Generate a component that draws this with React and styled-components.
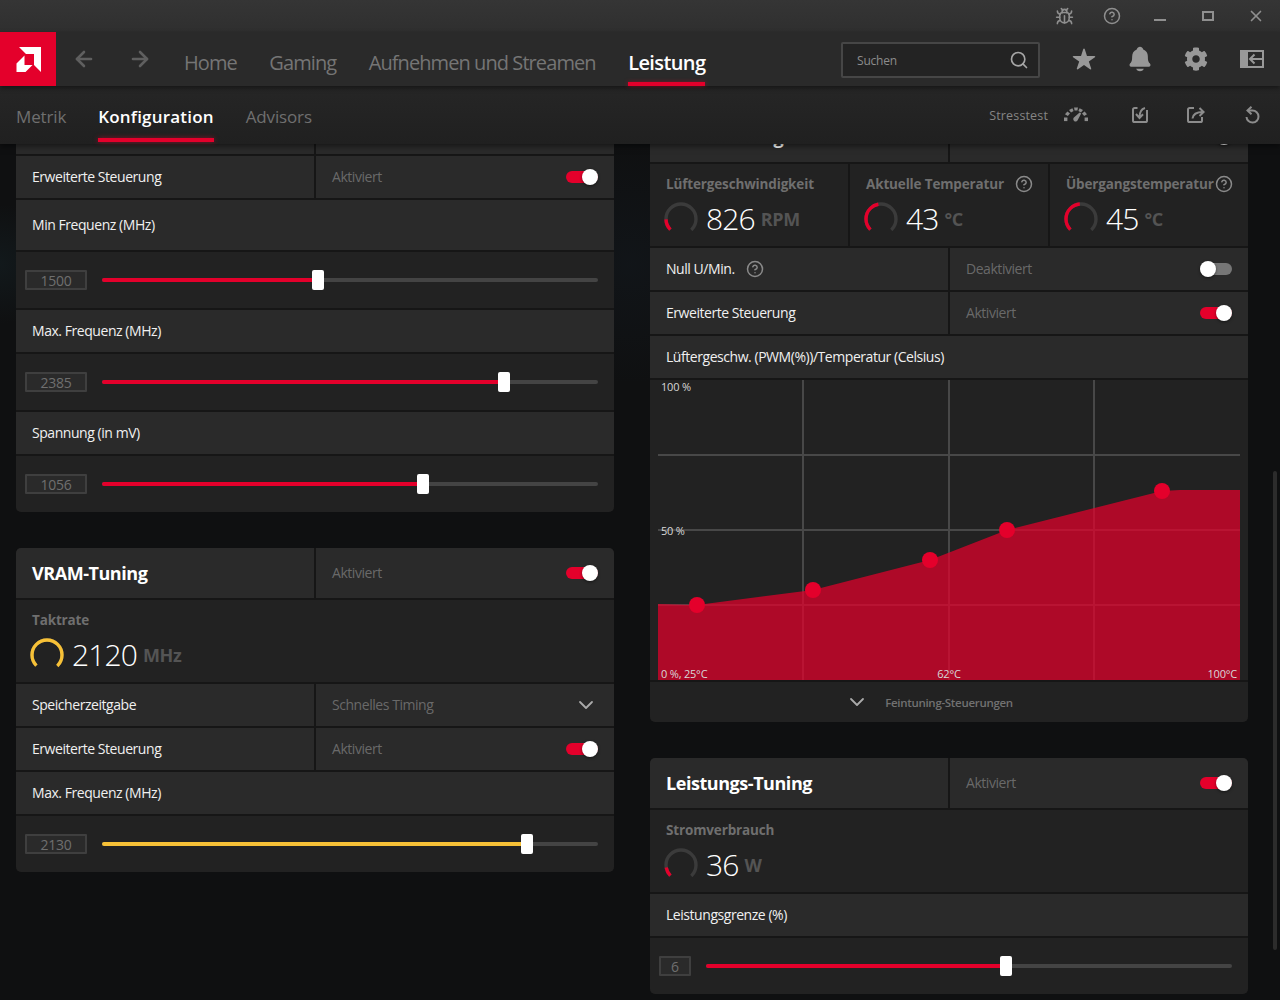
import styled, { createGlobalStyle } from "styled-components";
import { ArrowLeft, ArrowRight, Bug, ChevronDown, CircleHelp, Search, X } from "lucide-react";
import { FaCog } from "react-icons/fa";
import { IoNotifications, IoStar } from "react-icons/io5";

const RED = "#e4002b";
const YELLOW = "#f7c137";

const GlobalStyle = createGlobalStyle`
  html, body { margin: 0; padding: 0; background: #0f1011; }
  body { font-family: "Open Sans", "Liberation Sans", sans-serif; }
  * { box-sizing: border-box; }
`;

const Page = styled.div`
  position: relative;
  width: 1280px;
  height: 1000px;
  overflow: hidden;
  display: flex;
  flex-direction: column;
  background: #0f1011;
`;

const Header = styled.header`
  position: relative;
  z-index: 2;
  flex: none;
  box-shadow: 0 2px 6px rgba(0, 0, 0, 0.5);
`;

const TitleBar = styled.div`
  height: 32px;
  display: flex;
  justify-content: flex-end;
  align-items: center;
  background: linear-gradient(#353535, #2f2f2f);
`;

const TitleBtn = styled.div`
  width: 48px;
  display: flex;
  justify-content: center;
  align-items: center;
  color: #8f8f8f;
`;

const MinBar = styled.div`
  width: 12px;
  height: 2px;
  margin-top: 8px;
  background: #8f8f8f;
`;

const MaxBox = styled.div`
  width: 12px;
  height: 10px;
  border: 2px solid #8f8f8f;
`;

const NavBar = styled.div`
  position: relative;
  z-index: 1;
  height: 54px;
  display: flex;
  align-items: stretch;
  background: #2a2a2a;
  box-shadow: 0 2px 5px rgba(0, 0, 0, 0.45);
`;

const Logo = styled.div`
  width: 56px;
  display: flex;
  align-items: center;
  justify-content: center;
  background: ${RED};
`;

const ArrowBtn = styled.div`
  width: 56px;
  display: flex;
  align-items: center;
  justify-content: center;
  color: #5f5f5f;
`;

const NavLinks = styled.nav`
  display: flex;
  gap: 32.5px;
  margin-left: 16px;
`;

const NavLink = styled.div`
  position: relative;
  display: flex;
  align-items: center;
  padding-top: 6px;
  font-size: 20px;
  letter-spacing: ${(p) => (p.$active ? "-0.6px" : "-0.92px")};
  white-space: nowrap;
  color: ${(p) => (p.$active ? "#fff" : "#757575")};
  font-weight: ${(p) => (p.$active ? 600 : 400)};
  &::after {
    content: "";
    display: ${(p) => (p.$active ? "block" : "none")};
    position: absolute;
    left: 0;
    right: 0;
    bottom: 0;
    height: 4px;
    background: ${RED};
    box-shadow: 0 0 4px rgba(228, 0, 43, 0.5);
  }
`;

const SearchBox = styled.div`
  width: 199px;
  height: 36px;
  margin: 10px 16px 0 auto;
  padding: 0 9px 0 14px;
  display: flex;
  align-items: center;
  justify-content: space-between;
  background: #232323;
  border: 2px solid #464646;
  border-radius: 2px;
  color: #8c8c8c;
  font-size: 12px;
  letter-spacing: -0.2px;
  svg { color: #a6a6a6; }
`;

const NavIcon = styled.div`
  width: 56px;
  display: flex;
  align-items: center;
  justify-content: center;
  color: #989898;
`;

const SubBar = styled.div`
  height: 58px;
  display: flex;
  align-items: stretch;
  padding-left: 16px;
  background: linear-gradient(#262626, #202020);
`;

const SubLinks = styled.nav`
  display: flex;
  gap: 32px;
`;

const SubLink = styled.div`
  position: relative;
  display: flex;
  align-items: center;
  padding-top: 2px;
  font-size: 17px;
  letter-spacing: ${(p) => (p.$active ? "0.2px" : "-0.15px")};
  color: ${(p) => (p.$active ? "#fff" : "#6f6f6f")};
  font-weight: ${(p) => (p.$active ? 600 : 400)};
  &::after {
    content: "";
    display: ${(p) => (p.$active ? "block" : "none")};
    position: absolute;
    left: 0;
    right: 0;
    bottom: 2px;
    height: 4px;
    background: ${RED};
    box-shadow: 0 0 5px rgba(228, 0, 43, 0.55);
  }
`;

const SubTools = styled.div`
  margin-left: auto;
  display: flex;
  align-items: center;
  padding-bottom: 1px;
`;

const StressLabel = styled.span`
  font-size: 12.5px;
  letter-spacing: 0.15px;
  color: #858585;
  margin: 2px 16px 0 0;
`;

const SubIcon = styled.div`
  width: 56px;
  display: flex;
  justify-content: center;
  color: #8c8c8c;
  margin-left: ${(p) => p.$gap || 0}px;
`;

const Main = styled.main`
  flex: 1;
  min-height: 0;
  display: grid;
  grid-template-columns: 598px 598px;
  column-gap: 36px;
  align-items: start;
  padding-left: 16px;
  background:
    radial-gradient(circle at 630px 120px, rgba(30, 50, 70, 0.14), transparent 120px),
    radial-gradient(circle at 0 120px, rgba(30, 60, 70, 0.2), transparent 60px);
`;

const Column = styled.div`
  display: flex;
  flex-direction: column;
  gap: 36px;
  margin-top: ${(p) => p.$offset || 0}px;
`;

const Panel = styled.section`
  display: flex;
  flex-direction: column;
  gap: 2px;
  background: #161616;
  border-radius: ${(p) => (p.$cutTop ? "0 0 5px 5px" : "5px")};
  overflow: hidden;
`;

const Split = styled.div`
  display: grid;
  grid-template-columns: 298px 1fr;
  gap: 2px;
  height: ${(p) => p.$h || 42}px;
`;

const Cell = styled.div`
  display: flex;
  align-items: center;
  justify-content: space-between;
  padding: 0 16px;
  background: #2a2a2a;
  height: ${(p) => (p.$h ? p.$h + "px" : "auto")};
  font-size: 14px;
  line-height: 18px;
  letter-spacing: -0.45px;
  color: #f0f0f0;
`;

const Muted = styled.span`
  color: #696969;
`;

const Title = styled.span`
  font-size: 18px;
  font-weight: 700;
  letter-spacing: -0.45px;
  color: #fff;
`;

const InlineHelp = styled.span`
  display: flex;
  margin-left: 11px;
  color: #8a8a8a;
`;

const LeftGroup = styled.span`
  display: flex;
  align-items: center;
`;

const SelectChevron = styled(ChevronDown)`
  color: #aaa;
`;

const Track = styled.div`
  position: relative;
  width: 32px;
  height: 12px;
  border-radius: 6px;
  background: ${(p) => (p.$on ? RED : "#767676")};
`;

const Knob = styled.div`
  position: absolute;
  top: -2px;
  ${(p) => (p.$on ? "right: 0;" : "left: 0;")}
  width: 16px;
  height: 16px;
  border-radius: 50%;
  background: #fff;
  box-shadow: 0 1px 3px rgba(0, 0, 0, 0.5);
`;

const Toggle = ({ on }) => (
  <Track $on={on}>
    <Knob $on={on} />
  </Track>
);

const StatGrid = styled.div`
  display: grid;
  grid-template-columns: repeat(3, 1fr);
  gap: 2px;
`;

const StatCell = styled.div`
  height: 82px;
  padding: 11px 15px 0 16px;
  background: #222;
`;

const StatLabel = styled.div`
  display: flex;
  justify-content: space-between;
  align-items: center;
  height: 18px;
  font-size: 13.5px;
  font-weight: 700;
  letter-spacing: -0.15px;
  white-space: nowrap;
  color: #6f6f6f;
  svg { color: #8a8a8a; flex: none; }
`;

const StatBody = styled.div`
  display: flex;
  align-items: center;
  margin: 7px 0 0 -2px;
`;

const StatValue = styled.span`
  margin: 2px 0 0 8px;
  font-size: 30px;
  font-weight: 300;
  line-height: 34px;
  letter-spacing: -0.9px;
  color: #fff;
`;

const StatUnit = styled.span`
  margin: 1px 0 0 6px;
  font-size: 18px;
  font-weight: 700;
  letter-spacing: -0.3px;
  color: #545454;
`;

const SliderRow = styled.div`
  height: 56px;
  display: flex;
  align-items: center;
  gap: 15px;
  padding: 0 16px 0 9px;
  background: #222;
`;

const ValueBox = styled.div`
  flex: none;
  width: ${(p) => p.$w || 62}px;
  height: 20px;
  display: flex;
  align-items: center;
  justify-content: center;
  border: 2px solid #3f3f3f;
  border-radius: 1px;
  background: #2a2a2a;
  font-size: 14px;
  letter-spacing: -0.2px;
  color: #6f6f6f;
`;

const Rail = styled.div`
  position: relative;
  flex: 1;
  height: 4px;
  border-radius: 2px;
  background: #444;
`;

const Fill = styled.div`
  height: 100%;
  border-radius: 2px;
  background: ${(p) => p.$color};
`;

const Thumb = styled.div`
  position: absolute;
  top: -8px;
  width: 12px;
  height: 20px;
  margin-left: -6px;
  border-radius: 2px;
  background: #fff;
`;

const Slider = ({ value, percent, color = RED, boxWidth }) => (
  <SliderRow>
    <ValueBox $w={boxWidth}>{value}</ValueBox>
    <Rail>
      <Fill $color={color} style={{ width: `${percent}%` }} />
      <Thumb style={{ left: `${percent}%` }} />
    </Rail>
  </SliderRow>
);

const WideStat = styled.div`
  height: 82px;
  padding: 11px 16px 0;
  background: #222;
`;

const ChartWrap = styled.div`
  height: 300px;
  padding: 0 8px;
  background: #222;
`;

const ChartSvg = styled.svg`
  display: block;
  background: #222;
  text {
    font-family: "Open Sans", "Liberation Sans", sans-serif;
    font-size: 11px;
    letter-spacing: -0.2px;
    fill: #d8d8d8;
  }
`;

const ChartFooter = styled.div`
  height: 40px;
  display: grid;
  grid-template-columns: 1fr auto 1fr;
  align-items: center;
  background: #222;
  font-size: 11.5px;
  font-weight: 600;
  letter-spacing: -0.3px;
  color: #717171;
  svg { justify-self: end; margin-right: 16px; color: #aaa; }
`;

const ScrollThumb = styled.div`
  position: absolute;
  top: 471px;
  left: 1273px;
  width: 4px;
  height: 479px;
  border-radius: 2px;
  background: #2c2c2c;
`;

// ring with the gap at the bottom, value is 0..1 of the arc
const Gauge = ({ value, color = RED, size = 34 }) => {
  const r = 15;
  const c = 2 * Math.PI * r;
  const arc = c * 0.75;
  return (
    <svg width={size} height={32} viewBox="0 0 34 32" style={{ flex: "none" }}>
      <g transform="rotate(135 17 17)" fill="none" strokeWidth="3.4">
        <circle cx="17" cy="17" r={r} stroke="#3b3b3b" strokeDasharray={`${arc} ${c}`} />
        <circle cx="17" cy="17" r={r} stroke={color} strokeDasharray={`${arc * value} ${c}`} />
      </g>
    </svg>
  );
};

const AmdLogo = () => (
  <svg width="25" height="25" viewBox="0 0 25 25" fill="#fff">
    <path d="M3 0H25V25L18 18V7H10Z" />
    <path d="M8.5 8.5L0.5 16.5V25H9.5L16.5 18H8.5Z" />
  </svg>
);

const PanelIcon = () => (
  <svg width="24" height="18" viewBox="0 0 24 18" fill="none">
    <rect x="0" y="0" width="8" height="18" fill="#989898" />
    <rect x="1" y="1" width="22" height="16" stroke="#989898" strokeWidth="2" />
    <path d="M23 9H10M14.5 4.5L10 9l4.5 4.5" stroke="#989898" strokeWidth="2" />
  </svg>
);

const StressIcon = () => (
  <svg width="24" height="15" viewBox="0 0 24 15" fill="#8c8c8c">
    <rect x="0" y="10.5" width="3.4" height="3.6" />
    <rect x="20.6" y="10.5" width="3.4" height="3.6" />
    <path d="M1 7.2L3.4 4.4L6 6.4L3.8 9Z" />
    <path d="M23 7.2L20.6 4.4L18 6.4L20.2 9Z" />
    <path d="M5 3L8.4 1.2L9.6 4L7 5.4Z" />
    <path d="M19 3L15.6 1.2L14.4 4L17 5.4Z" />
    <path d="M10 0.6H14L13.4 3.4H10.6Z" />
    <path d="M15.6 5.4L17.2 6.4L14 12.6A2.4 2.4 0 1 1 10.2 10.2Z" />
  </svg>
);

const ImportIcon = () => (
  <svg width="16" height="16" viewBox="0 0 16 16" fill="none" stroke="#8c8c8c" strokeWidth="2">
    <path d="M5.5 1H2.6A1.6 1.6 0 0 0 1 2.6V13.4A1.6 1.6 0 0 0 2.6 15H13.4A1.6 1.6 0 0 0 15 13.4V3" />
    <path d="M13 1C9 2 7.5 5 7.5 10.5M4 7L7.5 11L11 7.3" />
  </svg>
);

const ExportIcon = () => (
  <svg width="18" height="16" viewBox="0 0 18 16" fill="none" stroke="#8c8c8c" strokeWidth="2">
    <path d="M7 1H2.6A1.6 1.6 0 0 0 1 2.6V13.4A1.6 1.6 0 0 0 2.6 15H13.4A1.6 1.6 0 0 0 15 13.4V10" />
    <path d="M5.5 11.5C6 7 9 5 16 5M12.5 1L16.6 5L12.5 9" />
  </svg>
);

const UndoIcon = () => (
  <svg width="16" height="18" viewBox="0 0 16 18" fill="none" stroke="#8c8c8c" strokeWidth="2">
    <path d="M3.8 4.6H8.5A6 6 0 1 1 2.5 11" />
    <path d="M7.5 0.8L3.5 4.6L7.5 8.2" />
  </svg>
);

const FanChart = () => {
  const pts = [
    [39, 225],
    [155, 210],
    [272, 180],
    [349, 150],
    [504, 111],
  ];
  const area = `M0 224L${pts.map((p) => p.join(" ")).join("L")}L522 110L582 110V300H0Z`;
  return (
    <ChartSvg width="582" height="300" viewBox="0 0 582 300">
      <g stroke="#484848" strokeWidth="2">
        {[145, 291, 436].map((x) => (
          <line key={x} x1={x} x2={x} y1="0" y2="300" />
        ))}
        {[75, 150, 225].map((y) => (
          <line key={y} x1="0" x2="582" y1={y} y2={y} />
        ))}
      </g>
      <path d={area} fill={RED} fillOpacity="0.72" />
      {pts.map((p) => (
        <circle key={p[0]} cx={p[0]} cy={p[1]} r="8" fill={RED} />
      ))}
      <text x="3" y="11">100 %</text>
      <text x="3" y="155">50 %</text>
      <text x="3" y="298">0 %, 25°C</text>
      <text x="291" y="298" textAnchor="middle">62°C</text>
      <text x="579" y="298" textAnchor="end">100°C</text>
    </ChartSvg>
  );
};

const StatItem = ({ label, value, unit, gauge, help, color }) => (
  <>
    <StatLabel>
      {label}
      {help && <CircleHelp size={18} strokeWidth={2} />}
    </StatLabel>
    <StatBody>
      <Gauge value={gauge} color={color} />
      <StatValue>{value}</StatValue>
      <StatUnit>{unit}</StatUnit>
    </StatBody>
  </>
);

const ToggleRow = ({ label, text, on, h, title }) => (
  <Split $h={h}>
    <Cell>{title ? <Title>{label}</Title> : label}</Cell>
    <Cell>
      <Muted>{text}</Muted>
      <Toggle on={on} />
    </Cell>
  </Split>
);

export default function App() {
  return (
    <Page>
      <GlobalStyle />
      <Header>
        <TitleBar>
          <TitleBtn><Bug size={19} strokeWidth={2} /></TitleBtn>
          <TitleBtn><CircleHelp size={18} strokeWidth={2} /></TitleBtn>
          <TitleBtn><MinBar /></TitleBtn>
          <TitleBtn><MaxBox /></TitleBtn>
          <TitleBtn><X size={18} strokeWidth={2.2} /></TitleBtn>
        </TitleBar>
        <NavBar>
          <Logo><AmdLogo /></Logo>
          <ArrowBtn><ArrowLeft size={24} strokeWidth={2.6} /></ArrowBtn>
          <ArrowBtn><ArrowRight size={24} strokeWidth={2.6} /></ArrowBtn>
          <NavLinks>
            <NavLink>Home</NavLink>
            <NavLink>Gaming</NavLink>
            <NavLink>Aufnehmen und Streamen</NavLink>
            <NavLink $active>Leistung</NavLink>
          </NavLinks>
          <SearchBox>
            Suchen
            <Search size={20} strokeWidth={2} />
          </SearchBox>
          <NavIcon><IoStar size={24} /></NavIcon>
          <NavIcon><IoNotifications size={28} /></NavIcon>
          <NavIcon><FaCog size={24} /></NavIcon>
          <NavIcon><PanelIcon /></NavIcon>
        </NavBar>
        <SubBar>
          <SubLinks>
            <SubLink>Metrik</SubLink>
            <SubLink $active>Konfiguration</SubLink>
            <SubLink>Advisors</SubLink>
          </SubLinks>
          <SubTools>
            <StressLabel>Stresstest</StressLabel>
            <StressIcon />
            <SubIcon $gap={24}><ImportIcon /></SubIcon>
            <SubIcon><ExportIcon /></SubIcon>
            <SubIcon><UndoIcon /></SubIcon>
          </SubTools>
        </SubBar>
      </Header>

      <Main>
        <Column>
          <Panel $cutTop>
            <Split $h={10}>
              <Cell />
              <Cell />
            </Split>
            <ToggleRow label="Erweiterte Steuerung" text="Aktiviert" on />
            <Cell $h={50}>Min Frequenz (MHz)</Cell>
            <Slider value="1500" percent={43.5} />
            <Cell $h={42}>Max. Frequenz (MHz)</Cell>
            <Slider value="2385" percent={81} />
            <Cell $h={42}>Spannung (in mV)</Cell>
            <Slider value="1056" percent={64.7} />
          </Panel>

          <Panel>
            <ToggleRow label="VRAM-Tuning" text="Aktiviert" on h={50} title />
            <WideStat>
              <StatItem label="Taktrate" value="2120" unit="MHz" gauge={1} color={YELLOW} />
            </WideStat>
            <Split>
              <Cell>Speicherzeitgabe</Cell>
              <Cell>
                <Muted>Schnelles Timing</Muted>
                <SelectChevron size={24} strokeWidth={1.8} />
              </Cell>
            </Split>
            <ToggleRow label="Erweiterte Steuerung" text="Aktiviert" on />
            <Cell $h={42}>Max. Frequenz (MHz)</Cell>
            <Slider value="2130" percent={85.6} color={YELLOW} />
          </Panel>
        </Column>

        <Column $offset={-32}>
          <Panel>
            <ToggleRow label="Lüfter-Tuning" text="Aktiviert" on h={50} title />
            <StatGrid>
              <StatCell>
                <StatItem label="Lüftergeschwindigkeit" value="826" unit="RPM" gauge={0.16} />
              </StatCell>
              <StatCell>
                <StatItem label="Aktuelle Temperatur" value="43" unit="°C" gauge={0.46} help />
              </StatCell>
              <StatCell>
                <StatItem label="Übergangstemperatur" value="45" unit="°C" gauge={0.48} help />
              </StatCell>
            </StatGrid>
            <Split>
              <Cell>
                <LeftGroup>
                  Null U/Min.
                  <InlineHelp><CircleHelp size={18} strokeWidth={2} /></InlineHelp>
                </LeftGroup>
              </Cell>
              <Cell>
                <Muted>Deaktiviert</Muted>
                <Toggle />
              </Cell>
            </Split>
            <ToggleRow label="Erweiterte Steuerung" text="Aktiviert" on />
            <Cell $h={42}>Lüftergeschw. (PWM(%))/Temperatur (Celsius)</Cell>
            <ChartWrap><FanChart /></ChartWrap>
            <ChartFooter>
              <ChevronDown size={24} strokeWidth={1.8} />
              <span>Feintuning-Steuerungen</span>
            </ChartFooter>
          </Panel>

          <Panel>
            <ToggleRow label="Leistungs-Tuning" text="Aktiviert" on h={50} title />
            <WideStat>
              <StatItem label="Stromverbrauch" value="36" unit="W" gauge={0.13} />
            </WideStat>
            <Cell $h={42}>Leistungsgrenze (%)</Cell>
            <Slider value="6" percent={57} boxWidth={32} />
          </Panel>
        </Column>
      </Main>
      <ScrollThumb />
    </Page>
  );
}
